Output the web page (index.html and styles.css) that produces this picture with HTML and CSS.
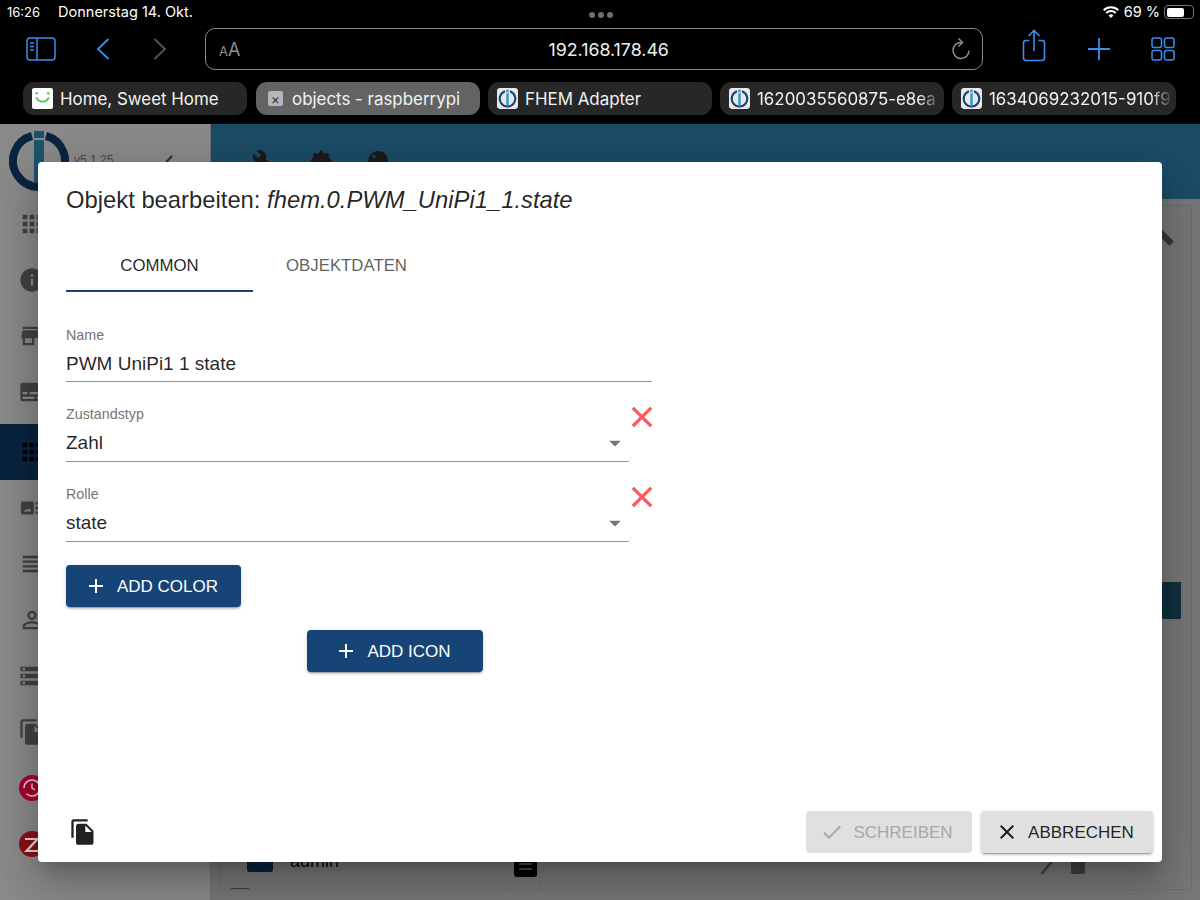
FILE: index.html
```html
<!DOCTYPE html>
<html lang="de">
<head>
<meta charset="utf-8">
<title>objects - raspberrypi</title>
<link rel="stylesheet" href="styles.css">
</head>
<body>
<svg class="defs" width="0" height="0">
  <defs>
    <symbol id="io" viewBox="0 0 20 20">
      <rect width="20" height="20" rx="3" fill="#e8e8e8"/>
      <path d="M7.6 3.2A7.4 7.4 0 1 0 12.4 3.2" fill="none" stroke="#164477" stroke-width="2"/>
      <rect x="8.8" y="1.6" width="2.4" height="2.4" fill="#3399cc"/>
      <rect x="8.8" y="5" width="2.4" height="12" fill="#3399cc"/>
    </symbol>
  </defs>
</svg>
<header class="chrome">
  <div class="status">
    <span class="time">16:26</span>
    <span class="date">Donnerstag 14. Okt.</span>
    <span class="dots"><i></i><i></i><i></i></span>
    <svg class="wifi" viewBox="0 0 16 12" width="16" height="12"><path d="M8 12 5.6 9.4a3.4 3.4 0 0 1 4.8 0zM3.9 7.7l-1.4-1.5a7.8 7.8 0 0 1 11 0l-1.4 1.5a5.8 5.8 0 0 0-8.200 0zM1.300 5 0 3.600a11.400 11.400 0 0 1 16 0L14.700 5a9.500 9.500 0 0 0-13.400 0z" fill="#fff"/></svg>
    <span class="pct">69 %</span>
    <span class="battery"><b></b></span>
  </div>
  <div class="toolbar">
    <svg class="tb-side" viewBox="0 0 30 24" width="30" height="24" fill="none" stroke="#3a8ef0" stroke-width="1.500"><rect x="1" y="1" width="28" height="22" rx="3"/><path d="M11 1v22M4 6h4M4 9.500h4M4 13h4"/></svg>
    <svg class="tb-back" viewBox="0 0 14 22" width="14" height="22" fill="none" stroke="#3a8ef0" stroke-width="1.800"><path d="M12.500 1 2 11l10.500 10"/></svg>
    <svg class="tb-fwd" viewBox="0 0 14 22" width="14" height="22" fill="none" stroke="#555" stroke-width="1.800"><path d="M1.500 1 12 11 1.500 21"/></svg>
    <div class="url">
      <span class="aa"><small>A</small>A</span>
      <span class="addr">192.168.178.46</span>
      <svg class="reload" viewBox="0 0 20 24" width="20" height="24" fill="none" stroke="#8e8e8e" stroke-width="1.500"><path d="M10.500 5.500A8 8 0 1 0 18 13.500"/><path d="M7.500 1.500l4 4-4 4"/></svg>
    </div>
    <svg class="tb-share" viewBox="0 0 24 34" width="24" height="34" fill="none" stroke="#3a8ef0" stroke-width="1.600"><path d="M7.500 11.500H4a2.500 2.500 0 0 0-2.500 2.500v15A2.500 2.500 0 0 0 4 31.500h16a2.500 2.500 0 0 0 2.500-2.500V14a2.500 2.500 0 0 0-2.500-2.500h-3.500M12 22V2M6.500 7 12 1.500 17.500 7"/></svg>
    <svg class="tb-plus" viewBox="0 0 22 22" width="22" height="22" fill="none" stroke="#3a8ef0" stroke-width="1.800"><path d="M11 0v22M0 11h22"/></svg>
    <svg class="tb-tabs" viewBox="0 0 24 24" width="24" height="24" fill="none" stroke="#3a8ef0" stroke-width="1.500"><rect x="1" y="1" width="9.500" height="9.500" rx="2"/><rect x="13.500" y="1" width="9.500" height="9.500" rx="2"/><rect x="1" y="13.500" width="9.500" height="9.500" rx="2"/><rect x="13.500" y="13.500" width="9.500" height="9.500" rx="2"/></svg>
  </div>
  <div class="tabs">
    <div class="tab">
      <svg class="fav" viewBox="0 0 20 20" width="21" height="21"><rect width="20" height="20" rx="2" fill="#fff"/><path d="M4 9a6.500 6.500 0 0 0 12 0" fill="none" stroke="#49d04f" stroke-width="1.800"/><circle cx="4.500" cy="5" r="1.200" fill="#49d04f"/><circle cx="15.500" cy="5" r="1.200" fill="#49d04f"/></svg>
      <span class="tab-text">Home, Sweet Home</span>
    </div>
    <div class="tab tab-on">
      <span class="fav-x">×</span>
      <span class="tab-text">objects - raspberrypi</span>
    </div>
    <div class="tab">
      <svg class="fav" width="21" height="21"><use href="#io"/></svg>
      <span class="tab-text">FHEM Adapter</span>
    </div>
    <div class="tab">
      <svg class="fav" width="21" height="21"><use href="#io"/></svg>
      <span class="tab-text tab-fade">1620035560875-e8ea</span>
    </div>
    <div class="tab">
      <svg class="fav" width="21" height="21"><use href="#io"/></svg>
      <span class="tab-text tab-fade">1634069232015-910f9</span>
    </div>
  </div>
</header>

<div class="app">
  <aside class="sidebar">
    <div class="brand">
      <svg class="logo" viewBox="0 0 60 60" width="60" height="60">
        <path d="M23 4.800A26 26 0 1 0 37 4.800" fill="none" stroke="#164477" stroke-width="8"/>
        <rect x="25" y="0" width="10" height="7" fill="#3399cc"/>
        <rect x="25" y="9" width="10" height="43" fill="#3399cc"/>
      </svg>
      <span class="version">v5.1.25</span>
      <svg class="collapse" viewBox="0 0 12 20" width="12" height="20" fill="none" stroke="#555" stroke-width="2"><path d="M10 1 1.500 10 10 19"/></svg>
    </div>
    <nav class="nav">
      <div class="nav-item"><svg class="nav-ico" viewBox="0 0 24 24"><path d="M4 8h4V4H4v4zm6 12h4v-4h-4v4zm-6 0h4v-4H4v4zm0-6h4v-4H4v4zm6 0h4v-4h-4v4zm6-10v4h4V4h-4zm-6 4h4V4h-4v4zm6 6h4v-4h-4v4zm0 6h4v-4h-4v4z"/></svg></div>
      <div class="nav-item"><svg class="nav-ico" viewBox="0 0 24 24"><path d="M12 2C6.480 2 2 6.480 2 12s4.480 10 10 10 10-4.480 10-10S17.520 2 12 2zm1 15h-2v-6h2v6zm0-8h-2V7h2v2z"/></svg></div>
      <div class="nav-item"><svg class="nav-ico" viewBox="0 0 24 24"><path d="M20 4H4v2h16V4zm1 10v-2l-1-5H4l-1 5v2h1v6h10v-6h4v6h2v-6h1zm-9 4H6v-4h6v4z"/></svg></div>
      <div class="nav-item"><svg class="nav-ico" viewBox="0 0 24 24"><path d="M20 4H4c-1.100 0-2 .9-2 2v12c0 1.100.9 2 2 2h16c1.100 0 2-.9 2-2V6c0-1.100-.9-2-2-2zM4 12h4v2H4v-2zm10 6H4v-2h10v2zm6 0h-4v-2h4v2zm0-4H10v-2h10v2z"/></svg></div>
      <div class="nav-item nav-on"><svg class="nav-ico" viewBox="0 0 24 24"><path d="M4 8h4V4H4v4zm6 12h4v-4h-4v4zm-6 0h4v-4H4v4zm0-6h4v-4H4v4zm6 0h4v-4h-4v4zm6-10v4h4V4h-4zm-6 4h4V4h-4v4zm6 6h4v-4h-4v4zm0 6h4v-4h-4v4z"/></svg></div>
      <div class="nav-item"><svg class="nav-ico" viewBox="0 0 24 24"><path d="M3.500 6.500h9a1 1 0 0 1 1 1v9a1 1 0 0 1-1 1h-9a1 1 0 0 1-1-1v-9a1 1 0 0 1 1-1zM4.500 15h7l-2-3-1.500 2-1-1zM15 7h2.500v2H15zm0 4h2.500v2H15zm0 4h2.500v2H15z" fill-rule="evenodd"/></svg></div>
      <div class="nav-item"><svg class="nav-ico" viewBox="0 0 24 24"><path d="M4 15h16v-2H4v2zm0 4h16v-2H4v2zm0-8h16V9H4v2zm0-6v2h16V5H4z"/></svg></div>
      <div class="nav-item"><svg class="nav-ico" viewBox="0 0 24 24"><path d="M12 5.900c1.160 0 2.100.94 2.100 2.100s-.94 2.100-2.100 2.100S9.900 9.160 9.900 8s.94-2.100 2.100-2.100m0 9c2.970 0 6.100 1.460 6.100 2.100v1.100H5.900V17c0-.64 3.130-2.100 6.100-2.100M12 4C9.790 4 8 5.790 8 8s1.790 4 4 4 4-1.790 4-4-1.790-4-4-4zm0 9c-2.670 0-8 1.340-8 4v3h16v-3c0-2.660-5.330-4-8-4z"/></svg></div>
      <div class="nav-item"><svg class="nav-ico" viewBox="0 0 24 24"><path d="M2 20h20v-4H2v4zm2-3h2v2H4v-2zM2 4v4h20V4H2zm4 3H4V5h2v2zm-4 7h20v-4H2v4zm2-3h2v2H4v-2z"/></svg></div>
      <div class="nav-item"><svg class="nav-ico" viewBox="0 0 24 24"><path d="M16 1H4c-1.100 0-2 .9-2 2v14h2V3h12V1zm-1 4l6 6v10c0 1.100-.9 2-2 2H7.990C6.890 23 6 22.100 6 21l.01-14c0-1.100.89-2 1.990-2h7zm-1 7h5.500L14 6.500V12z"/></svg></div>
      <div class="nav-item"><svg class="badge" viewBox="0 0 26 26"><circle cx="13" cy="13" r="13" fill="#a8002e"/><path d="M5 13a8 8 0 1 1 2.500 5.800M13 8.500V13l3 2" fill="none" stroke="#d8d8d8" stroke-width="1.500"/></svg></div>
      <div class="nav-item"><svg class="badge" viewBox="0 0 26 26"><circle cx="13" cy="13" r="13" fill="#8c0f18"/><path d="M6 7h15l-11 12h11v2H5l11-12H6z" fill="#d8d8d8"/></svg></div>
    </nav>
  </aside>
  <main class="main">
    <div class="appbar">
      <svg class="bar-ico" viewBox="0 0 24 24"><path d="M22.700 19l-9.100-9.100c.9-2.300.4-5-1.500-6.900-2-2-5-2.400-7.400-1.300L9 6 6 9 1.600 4.700C.4 7.100.9 10.100 2.900 12.100c1.900 1.900 4.600 2.400 6.900 1.500l9.100 9.100c.4.400 1 .4 1.400 0l2.300-2.300c.5-.4.500-1.100.1-1.400z"/></svg>
      <svg class="bar-ico" viewBox="0 0 24 24"><path d="M12 1l3 3.500 4.500-.5.500 4.500L23 12l-3 3.500-.5 4.500-4.500-.5L12 23l-3-3.500-4.500.5-.5-4.500L1 12l3-3.500.5-4.500L9 4.500z"/></svg>
      <svg class="bar-ico" viewBox="0 0 24 24"><path d="M12 2a10 10 0 1 0 0 20c1.700 0 2-1.300 1.500-2.500-.6-1.500.3-2.500 1.500-2.500h2c2.800 0 5-2 5-5 0-5.500-4.500-10-10-10zM8 9a1.500 1.500 0 1 1 0-3 1.500 1.500 0 0 1 0 3z"/></svg>
    </div>
    <div class="content">
      <div class="card">
        <svg class="search" viewBox="0 0 24 24"><path d="M15.500 14h-.79l-.28-.27C15.410 12.590 16 11.110 16 9.500 16 5.910 13.090 3 9.500 3S3 5.910 3 9.500 5.910 16 9.500 16c1.610 0 3.090-.59 4.230-1.570l.27.28v.79l5 4.990L20.490 19l-4.990-5zm-6 0C7.010 14 5 11.990 5 9.500S7.010 5 9.500 5 14 7.010 14 9.500 11.990 14 9.500 14z"/></svg>
        <div class="add-user"></div>
        <div class="user-row">
          <span class="chip"></span>
          <span class="user-name">admin</span>
          <svg class="user-mid" viewBox="0 0 23 27"><rect width="23" height="27" rx="3" fill="#000"/><path d="M5 13h13v2H5zM5 18h13v2H5z" fill="#888"/></svg>
          <svg class="row-ico" viewBox="0 0 16 12"><path d="M0 12 10 0h3L3 12z"/></svg>
          <span class="row-trash"></span>
        </div>
        <div class="user-tail">
          <span class="stub"></span>
          <span class="tail-box"></span>
        </div>
      </div>
    </div>
  </main>
  <div class="backdrop"></div>
</div>

<section class="dialog">
  <h1 class="title">Objekt bearbeiten: <em>fhem.0.PWM_UniPi1_1.state</em></h1>
  <div class="dtabs">
    <div class="dtab dtab-on">COMMON</div>
    <div class="dtab">OBJEKTDATEN</div>
  </div>
  <div class="form">
    <div class="field field-name">
      <label class="lbl">Name</label>
      <div class="val">PWM UniPi1 1 state</div>
    </div>
    <div class="sel-row">
      <div class="field field-sel">
        <label class="lbl">Zustandstyp</label>
        <div class="val">Zahl<svg class="caret" viewBox="0 0 24 24"><path d="M7 10l5 5 5-5z"/></svg></div>
      </div>
      <svg class="rm" viewBox="5 5 14 14"><path d="M19 6.410L17.590 5 12 10.590 6.410 5 5 6.410 10.590 12 5 17.590 6.410 19 12 13.410 17.590 19 19 17.590 13.410 12z"/></svg>
    </div>
    <div class="sel-row">
      <div class="field field-sel">
        <label class="lbl">Rolle</label>
        <div class="val">state<svg class="caret" viewBox="0 0 24 24"><path d="M7 10l5 5 5-5z"/></svg></div>
      </div>
      <svg class="rm" viewBox="5 5 14 14"><path d="M19 6.410L17.590 5 12 10.590 6.410 5 5 6.410 10.590 12 5 17.590 6.410 19 12 13.410 17.590 19 19 17.590 13.410 12z"/></svg>
    </div>
    <button class="btn btn-primary btn-color"><svg class="btn-ico" viewBox="0 0 24 24"><path d="M19 13h-6v6h-2v-6H5v-2h6V5h2v6h6v2z"/></svg>ADD COLOR</button>
    <button class="btn btn-primary btn-icon"><svg class="btn-ico" viewBox="0 0 24 24"><path d="M19 13h-6v6h-2v-6H5v-2h6V5h2v6h6v2z"/></svg>ADD ICON</button>
  </div>
  <div class="actions">
    <svg class="copy" viewBox="0 0 24 24"><path d="M16 1H4c-1.100 0-2 .9-2 2v14h2V3h12V1zm-1 4l6 6v10c0 1.100-.9 2-2 2H7.990C6.890 23 6 22.100 6 21l.01-14c0-1.100.89-2 1.990-2h7zm-1 7h5.500L14 6.500V12z"/></svg>
    <button class="btn btn-off"><svg class="btn-ico" viewBox="0 0 24 24"><path d="M9 16.170L4.830 12l-1.420 1.410L9 19 21 7l-1.410-1.410z"/></svg>SCHREIBEN</button>
    <button class="btn btn-cancel"><svg class="btn-ico" viewBox="0 0 24 24"><path d="M19 6.410L17.590 5 12 10.590 6.410 5 5 6.410 10.590 12 5 17.590 6.410 19 12 13.410 17.590 19 19 17.590 13.410 12z"/></svg>ABBRECHEN</button>
  </div>
</section>
</body>
</html>
```

FILE: styles.css
```css
* { box-sizing: border-box; }
html, body { margin: 0; height: 900px; overflow: hidden; background: #000; }
body { font-family: "Liberation Sans", Arial, sans-serif; position: relative; }
.defs { position: absolute; }

/* browser chrome */
.chrome { height: 124px; background: #000; color: #fff; font-family: Inter, "Liberation Sans", sans-serif; display: flex; flex-direction: column; }
.status { height: 28px; display: flex; align-items: center; padding: 0 6px 4px 7px; font-size: 13px; line-height: 16px; }
.date { margin-left: 18px; font-size: 14.500px; }
.dots { margin-left: 396px; display: flex; gap: 3px; margin-top: 6px; }
.dots i { width: 6px; height: 6px; border-radius: 50%; background: #6e6e6e; }
.wifi { margin-left: auto; }
.pct { margin-left: 5px; font-size: 14.500px; }
.battery { margin-left: 4px; width: 30px; height: 14px; border: 1px solid #777; border-radius: 4px; padding: 1.500px; display: block; }
.battery b { display: block; width: 68%; height: 100%; background: #fff; border-radius: 2px; }

.toolbar { height: 42px; display: flex; align-items: center; }
.tb-side { margin-left: 26px; }
.tb-back { margin-left: 40px; }
.tb-fwd { margin-left: 43px; }
.url { margin-left: 38px; width: 778px; height: 42px; border: 1px solid #8a8a8a; border-radius: 10px; display: flex; align-items: center; padding: 0 11px 0 13px; justify-content: space-between; }
.aa { color: #8e8e8e; font-size: 18px; }
.aa small { font-size: 13px; }
.addr { font-size: 17.800px; color: #eee; margin-left: 26px; }
.reload { display: block; }
.tb-share { margin-left: 39px; margin-top: -6px; }
.tb-plus { margin-left: 42px; }
.tb-tabs { margin-left: 41px; }

.tabs { display: flex; gap: 8px; padding: 12px 0 0 23px; }
.tab { width: 224px; height: 33px; border-radius: 11px; background: #272727; display: flex; align-items: center; padding-left: 9px; overflow: hidden; }
.tab:first-child { margin-right: 1px; }
.tab-on { background: #636363; }
.fav { flex: none; display: block; }
.fav-x { flex: none; width: 15px; height: 15px; margin: 0 2px 0 3px; background: #b5b5bd; color: #333; font-size: 14px; line-height: 15px; text-align: center; border-radius: 2px; }
.tab-text { margin-left: 7px; font-size: 16.900px; color: #f2f2f2; white-space: nowrap; overflow: hidden; }
.tab-fade { flex: 1; margin-right: 3px; -webkit-mask-image: linear-gradient(90deg, #000 88%, transparent); mask-image: linear-gradient(90deg, #000 88%, transparent); }

/* application behind the dialog */
.app { height: 776px; display: flex; position: relative; background: #dcdcdc; overflow: hidden; }
.sidebar { width: 211px; flex: none; background: #fff; border-right: 1px solid #d0d0d0; }
.brand { height: 72px; display: flex; align-items: center; padding: 0 36px 0 9px; }
.logo { display: block; margin-top: 2px; }
.version { margin-left: 5px; font-size: 12px; color: #888; }
.collapse { margin-left: auto; margin-top: 10px; }
.nav-item { height: 56px; display: flex; align-items: center; padding-left: 18px; }
.nav-on { background: #134477; margin-top: 4px; }
.nav-on .nav-ico { fill: #000; }
.nav-ico { width: 28px; height: 28px; fill: #7a7a7a; }
.badge { width: 26px; height: 26px; margin-left: 1px; display: block; position: relative; z-index: 1; }

.main { flex: 1; display: flex; flex-direction: column; min-width: 0; }
.appbar { height: 75px; background: #328dbd; display: flex; align-items: flex-start; padding: 25px 0 0 41px; gap: 33px; }
.bar-ico { width: 24px; height: 24px; fill: #333; }
.content { flex: 1; padding: 6px 8px 10px 8px; }
.card { height: 100%; border: 1px solid #c8c8c8; border-radius: 4px; display: flex; flex-direction: column; }
.search { width: 70px; height: 70px; fill: #666; align-self: flex-end; margin: -20px 7px 0 0; flex: none; }
.add-user { align-self: flex-end; width: 84px; height: 37px; background: #225a75; margin: 326px 10px 0 0; }
.user-row { display: flex; align-items: center; margin-top: 231px; height: 22px; padding-left: 27px; }
.chip { width: 26px; height: 22px; border-radius: 2px; background: #134477; }
.user-name { margin-left: 17px; width: 50px; font-size: 18px; color: #111; }
.user-mid { margin-left: 174px; width: 23px; height: 27px; margin-top: 5px; flex: none; }
.row-ico { width: 16px; height: 12px; fill: #777; margin-left: 503px; margin-top: 13px; }
.row-trash { width: 14px; height: 13px; margin-left: 15px; background: #777; border-radius: 2px; margin-top: 13px; }
.user-tail { margin-top: auto; display: flex; align-items: flex-end; height: 6px; padding-left: 11px; }
.stub { width: 18px; height: 1px; background: #5577aa; }
.tail-box { width: 32px; height: 6px; border: 1px solid #ccc; border-bottom: 0; margin-left: 260px; }
.backdrop { position: absolute; inset: 0; background: rgba(0,0,0,.46); }

/* dialog */
.dialog { position: absolute; z-index: 2; left: 38px; top: 162px; width: 1124px; height: 700px; background: #fff; border-radius: 4px; display: flex; flex-direction: column; color: rgba(0,0,0,.87); box-shadow: 0 11px 15px -7px rgba(0,0,0,.2), 0 24px 38px 3px rgba(0,0,0,.14), 0 9px 46px 8px rgba(0,0,0,.12); }
.title { margin: 0; padding: 24px 28px 0; font-size: 23.800px; line-height: 28px; font-weight: 400; }
.title em { font-style: italic; }
.dtabs { display: flex; margin: 24px 0 0 28px; }
.dtab { width: 187px; height: 54px; display: flex; align-items: center; justify-content: center; font-size: 16.800px; color: rgba(0,0,0,.65); padding-top: 1px; }
.dtab-on { color: rgba(0,0,0,.87); border-bottom: 2px solid #164477; padding-top: 3px; }
.form { flex: 1; padding: 35px 0 0 28px; display: flex; flex-direction: column; align-items: flex-start; }
.field { border-bottom: 1px solid #949494; height: 55px; }
.field-name { width: 586px; }
.field-sel { width: 563px; height: 56px; }
.lbl { display: block; font-size: 14.300px; line-height: 16px; color: #757575; }
.val { font-size: 19px; line-height: 24px; margin-top: 9px; height: 24px; display: flex; justify-content: space-between; align-items: center; }
.caret { width: 28px; height: 28px; fill: #757575; margin-right: 0; }
.sel-row { display: flex; align-items: flex-start; margin-top: 24px; }
.rm { width: 20px; height: 20px; fill: #ff5a5f; stroke: #ff5a5f; stroke-width: .5; margin: 1px 0 0 3px; overflow: visible; }
.btn { border: 0; border-radius: 4px; height: 42px; display: flex; align-items: center; justify-content: center; font-family: inherit; font-size: 17px; padding: 2px 5px 0 0; }
.btn-ico { width: 24px; height: 24px; margin: -2px 9px 0 0; fill: currentColor; }
.btn-primary { background: #164477; color: #fff; width: 175px; box-shadow: 0 3px 1px -2px rgba(0,0,0,.2), 0 2px 2px 0 rgba(0,0,0,.14), 0 1px 5px 0 rgba(0,0,0,.12); }
.btn-color { margin-top: 23px; }
.btn-icon { margin: 23px 0 0 241px; width: 176px; }
.actions { display: flex; align-items: center; height: 42px; margin-bottom: 9px; }
.copy { width: 28px; height: 28px; margin: 0 0 0 31px; fill: #222; }
.btn-off { margin-left: auto; width: 166px; background: #e0e0e0; color: #a8a8a8; }
.btn-cancel { margin: 0 9px 0 9px; width: 172px; background: #e0e0e0; color: rgba(0,0,0,.87); box-shadow: 0 3px 1px -2px rgba(0,0,0,.2), 0 2px 2px 0 rgba(0,0,0,.14), 0 1px 5px 0 rgba(0,0,0,.12); }
```
